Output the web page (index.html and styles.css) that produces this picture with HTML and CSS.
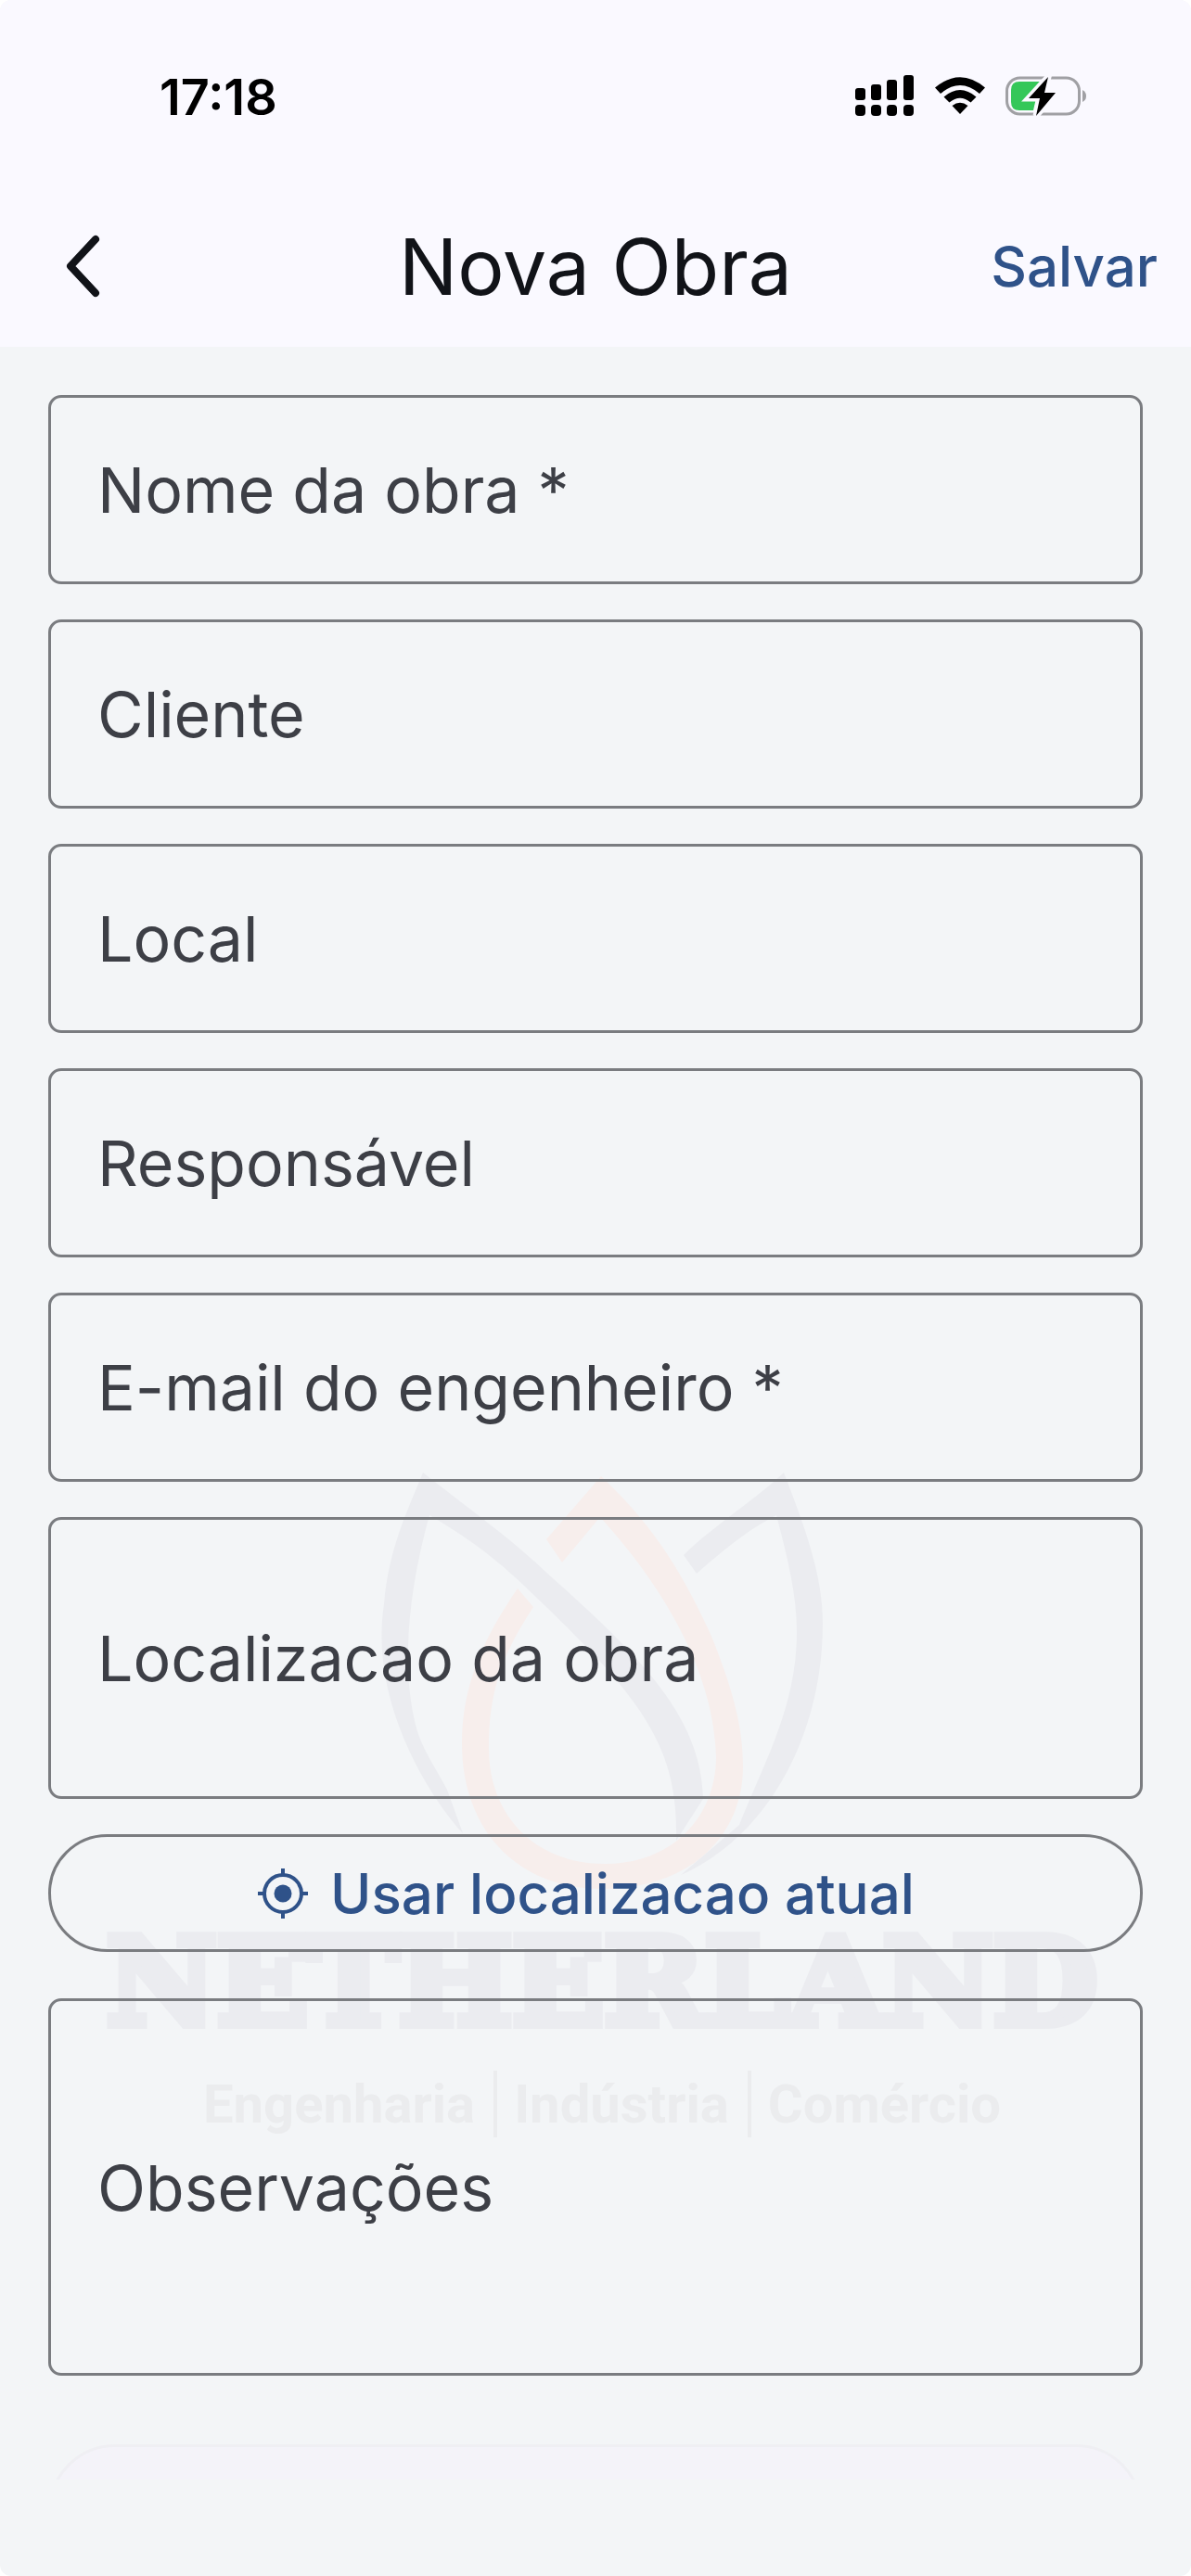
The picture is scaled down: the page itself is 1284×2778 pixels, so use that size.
FILE: index.html
```
<!DOCTYPE html>
<html lang="pt-BR">
<head>
    <meta charset="UTF-8">
    <meta name="viewport" content="width=device-width, initial-scale=1.0">
    <title>Nova Obra</title>
    <link rel="stylesheet" href="styles.css">
</head>
<body>
    <div class="screen">
        <header class="top">
            <div class="status">
                <span class="time">17:18</span>
                <div class="status-icons">
                    <svg width="64" height="46" viewBox="0 0 64 46">
                        <rect x="0" y="14" width="11" height="13" rx="3"/>
                        <rect x="17" y="10" width="11" height="17" rx="3"/>
                        <rect x="34" y="5" width="11" height="22" rx="3"/>
                        <rect x="52" y="0" width="11" height="27" rx="3"/>
                        <rect x="0" y="32" width="11" height="12" rx="4"/>
                        <rect x="17" y="32" width="11" height="12" rx="4"/>
                        <rect x="34" y="32" width="11" height="12" rx="4"/>
                        <rect x="52" y="32" width="11" height="12" rx="4"/>
                    </svg>
                    <svg width="54" height="46" viewBox="0 0 54 46">
                        <path d="M0 13.500Q27-9 54 13.500L48 20Q27 2 6 20Z"/>
                        <path d="M9.500 23.500Q27 8.500 44.500 23.500L38.500 29.500Q27 20 15.500 29.500Z"/>
                        <path d="M18.500 33Q27 26.500 35.500 33L27 42Z"/>
                    </svg>
                    <svg class="battery" width="88" height="46" viewBox="0 0 88 46">
                        <rect x="1.500" y="3" width="78" height="39" rx="14" fill="none" stroke="#a0a0a4" stroke-width="3"/>
                        <path d="M83 16Q87 18 87 22.500T83 29Z" fill="#a0a0a4"/>
                        <path d="M15 7H38L26 25H33L30 38H15Q6 38 6 29V16Q6 7 15 7Z" fill="#34c759"/>
                        <path d="M46 2L25 25H37L33 44L54 19H42Z" stroke="#faf9ff" stroke-width="7" paint-order="stroke"/>
                    </svg>
                </div>
            </div>
            <div class="appbar">
                <button type="button" class="back" aria-label="Voltar">
                    <svg width="48" height="72" viewBox="0 0 48 72">
                        <path d="M38 7L11 36L38 65" fill="none" stroke="#111318" stroke-width="8" stroke-linecap="round" stroke-linejoin="round"/>
                    </svg>
                </button>
                <h1>Nova Obra</h1>
                <button type="submit" form="obra" class="save">Salvar</button>
            </div>
        </header>

        <main class="content">
            <div class="watermark">
                <svg class="logo" width="480" height="450" viewBox="410 1588 480 450">
                    <path class="petal" d="M457 1588C500 1622 555 1662 587 1693C690 1785 757 1850 759 1940L730 1985C733 1880 690 1828 566 1710C530 1676 500 1655 464 1634C440 1720 434 1800 449 1860C455 1885 470 1905 483 1930L500 1977C470 1945 398 1840 415 1730C420 1670 440 1630 457 1588Z"/>
                    <path class="petal" d="M846 1588C870 1650 888 1700 888 1750C888 1870 830 1980 735 2022L798 1968C825 1900 860 1840 860 1760C860 1720 850 1680 838 1634C810 1648 780 1672 752 1697L738 1677C770 1645 815 1618 846 1588Z"/>
                    <path class="drop" d="M649 1592C700 1640 735 1690 769 1767C790 1820 802 1860 802 1905C802 1980 745 2037 650 2037C560 2037 499 1975 499 1880C499 1820 520 1770 559 1713L576 1733C545 1780 528 1820 528 1885C528 1960 580 2010 653 2010C730 2010 773 1955 773 1895C770 1800 715 1710 648 1636L607 1685L590 1660Z"/>
                </svg>
                <p class="brand">NETHERLAND</p>
                <p class="tagline"><span>Engenharia</span><span>Indústria</span><span>Comércio</span></p>
            </div>

            <form id="obra" class="form">
                <div class="field">
                    <label for="nome">Nome da obra *</label>
                    <input type="text" id="nome">
                </div>
                <div class="field">
                    <label for="cliente">Cliente</label>
                    <input type="text" id="cliente">
                </div>
                <div class="field">
                    <label for="local">Local</label>
                    <input type="text" id="local">
                </div>
                <div class="field">
                    <label for="responsavel">Responsável</label>
                    <input type="text" id="responsavel">
                </div>
                <div class="field">
                    <label for="email">E-mail do engenheiro *</label>
                    <input type="email" id="email">
                </div>
                <div class="field medium">
                    <label for="localizacao">Localizacao da obra</label>
                    <textarea id="localizacao"></textarea>
                </div>
                <button type="button" class="locate">
                    <svg width="54" height="54" viewBox="0 0 54 54">
                        <circle cx="27" cy="27" r="20" fill="none" stroke="#2f5289" stroke-width="4"/>
                        <circle cx="27" cy="27" r="9.500" fill="#2f5289"/>
                        <path d="M27 0V7M27 47V54M0 27H7M47 27H54" stroke="#2f5289" stroke-width="4"/>
                    </svg>
                    Usar localizacao atual
                </button>
                <div class="field large">
                    <label for="obs">Observações</label>
                    <textarea id="obs"></textarea>
                </div>
                <button type="submit" class="submit" aria-label="Salvar obra"></button>
            </form>
        </main>
    </div>
</body>
</html>
```
FILE: styles.css
```
*{
    box-sizing: border-box;
}
html{
    background-color: #fff;
}
body{
    margin: 0;
    font-family: Inter, "Liberation Sans", sans-serif;
    color: #111318;
}
button{
    border: none;
    background: none;
    padding: 0;
    font-family: inherit;
}
svg{
    display: block;
}
.screen{
    height: 100vh;
    display: flex;
    flex-direction: column;
    padding-bottom: 104px;
    border-radius: 12px;
    overflow: hidden;
    background-color: #f3f5f7;
}

/* header */
.top{
    background-color: #faf9ff;
}
.status{
    height: 200px;
    padding: 8px 112px 0 172px;
    display: flex;
    align-items: center;
    justify-content: space-between;
}
.time{
    font-size: 54px;
    font-weight: 600;
    color: #000;
}
.status-icons{
    display: flex;
    gap: 22px;
}
.appbar{
    height: 174px;
    padding: 0 36px;
    display: grid;
    grid-template-columns: 1fr auto 1fr;
    align-items: center;
}
.back{
    justify-self: start;
    padding-left: 29px;
}
h1{
    margin: 0;
    font-size: 84px;
    font-weight: 400;
}
.save{
    justify-self: end;
    font-size: 60px;
    font-weight: 500;
    color: #2f5289;
}

/* form */
.content{
    flex: 1;
    min-height: 0;
    position: relative;
    overflow: hidden;
}
.form{
    position: relative;
    display: flex;
    flex-direction: column;
    gap: 38px;
    padding: 52px 52px 0;
}
.field{
    flex: none;
    height: 204px;
    display: grid;
    align-items: center;
    border: 3px solid #7a7c80;
    border-radius: 14px;
}
.field label, .field input, .field textarea{
    grid-area: 1 / 1;
}
.field label{
    padding: 0 50px;
    font-size: 68px;
    color: #3d3f46;
}
.field input, .field textarea{
    width: 100%;
    height: 100%;
    padding: 0 50px;
    border: none;
    outline: none;
    resize: none;
    background: none;
    font: inherit;
    font-size: 68px;
}
.medium{
    height: 304px;
}
.large{
    height: 407px;
    margin-top: 12px;
}
.locate{
    flex: none;
    height: 127px;
    padding-right: 20px;
    display: flex;
    align-items: center;
    justify-content: center;
    gap: 24px;
    border: 3px solid #7a7c80;
    border-radius: 64px;
    font-size: 60px;
    font-weight: 500;
    color: #2f5289;
}
.submit{
    flex: none;
    height: 144px;
    margin-top: 36px;
    border: 3px solid #efeff3;
    border-radius: 72px;
    background-color: #f4f3f9;
}

/* logo behind the form */
.watermark{
    position: absolute;
    top: 1214px;
    left: 0;
    right: 0;
    padding-left: 14px;
    display: flex;
    flex-direction: column;
    align-items: center;
}
.petal{
    fill: #ebecf0;
}
.drop{
    fill: #f7eeec;
}
.brand{
    margin: 30px 0 0;
    font-family: "DejaVu Serif", serif;
    font-size: 130px;
    font-weight: 700;
    line-height: 140px;
    color: #ebecf0;
    -webkit-text-stroke: 10px #ebecf0;
}
.tagline{
    margin: 25px 0 0;
    display: flex;
    font-family: Roboto, sans-serif;
    font-size: 58px;
    font-weight: 700;
    line-height: 72px;
    color: #ebecee;
}
.tagline span + span{
    margin-left: 20px;
    padding-left: 18px;
    border-left: 4px solid #ebecee;
}
```
